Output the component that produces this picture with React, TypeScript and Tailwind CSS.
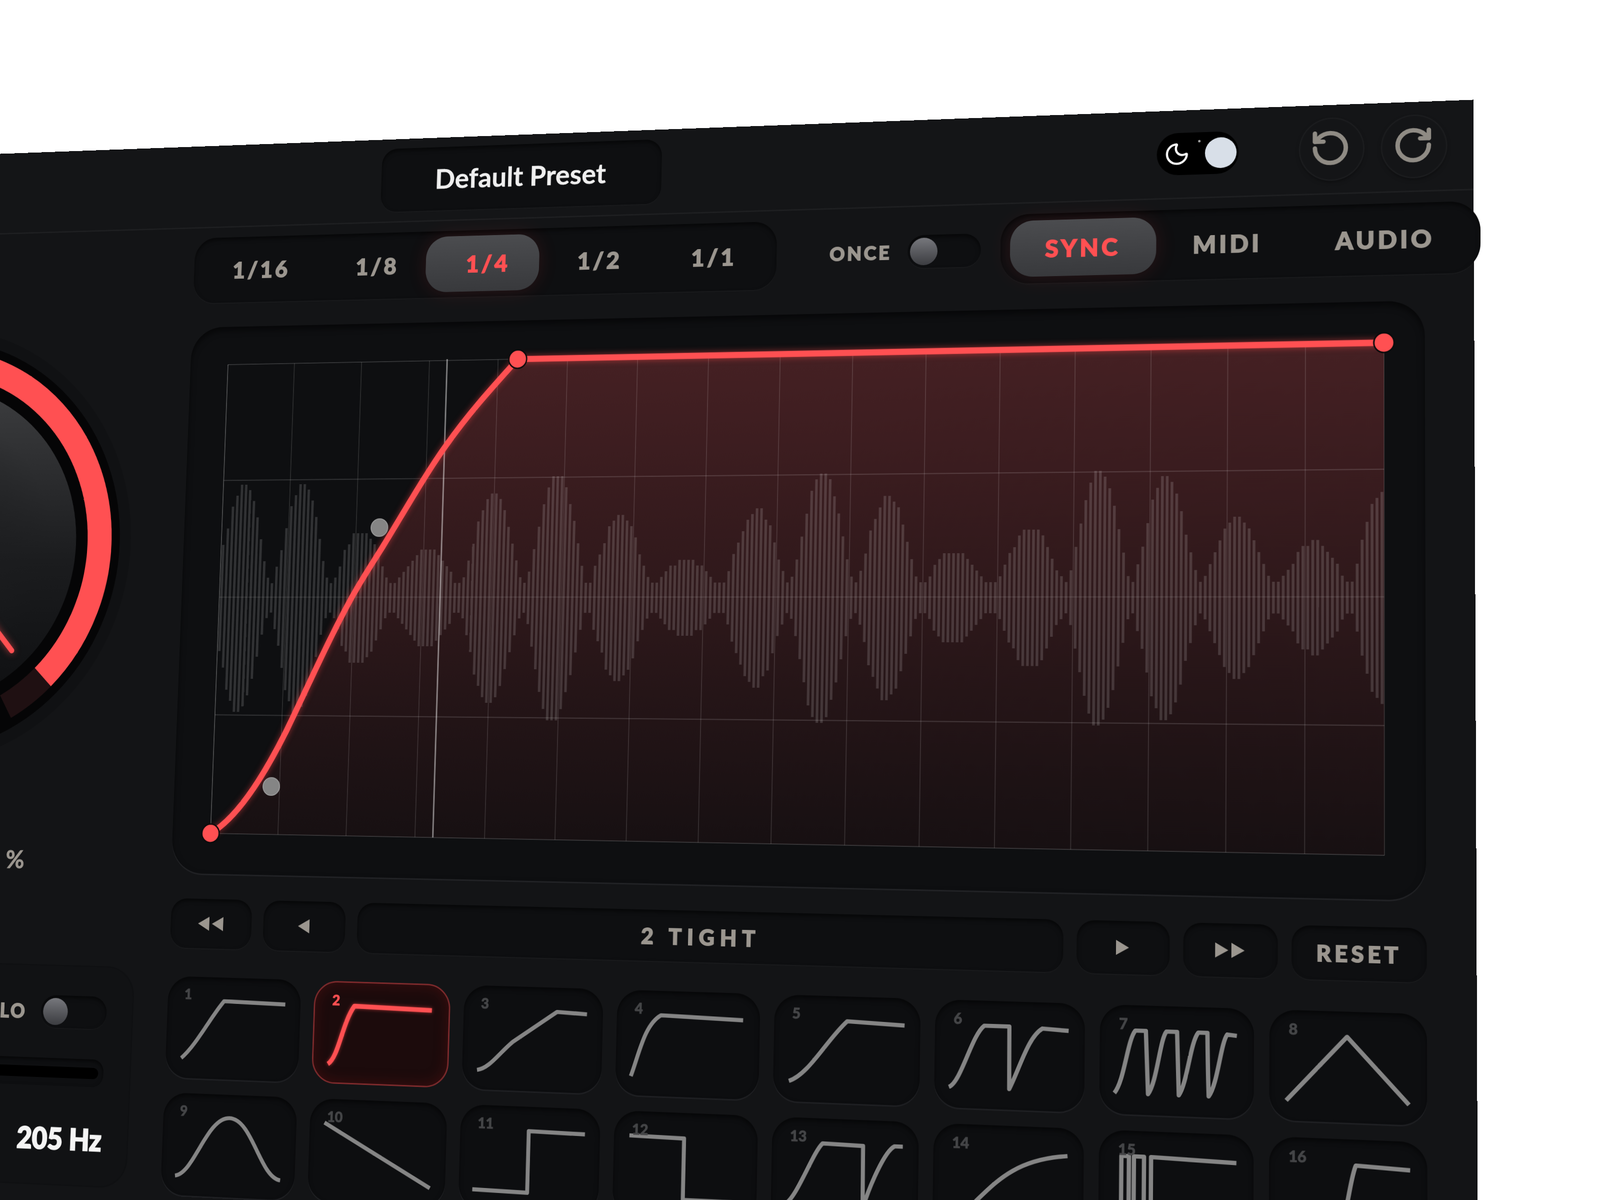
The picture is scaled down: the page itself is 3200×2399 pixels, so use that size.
import { Moon, RotateCcw, RotateCw } from "lucide-react";

const LOBES: [number, number][] = [
  [-90, 120], [48, 242], [184, 244], [317, 138], [474, 100], [617, 222], [759, 258], [898, 168], [1042, 74],
  [1196, 178], [1333, 256], [1473, 205], [1611, 90], [1774, 138], [1910, 256], [2043, 242], [2185, 152],
  [2343, 107], [2475, 208], [2620, 100],
];

function amplitude(x: number) {
  let i = 0;
  while (i < LOBES.length - 2 && LOBES[i + 1][0] <= x) i++;
  const [x0, a0] = LOBES[i];
  const [x1, a1] = LOBES[i + 1];
  const t = (x - x0) / (x1 - x0);
  const d = t < 0.5 ? t : 1 - t;
  const a = t < 0.5 ? a0 : a1;
  return 18 + (a - 18) * Math.pow(Math.cos(Math.PI * d), 1.4);
}

const BARS = Array.from({ length: 256 }, (_, i) => {
  const x = i * 9.69 + 2;
  return { x, a: Math.round(amplitude(x) / 12) * 12 + 8 };
});

const CURVE =
  "M0 1025 C 70 985 130 875 167 800 C 212 705 257 602 302 519 C 325 476 348 442 371 405 C 417 330 463 248 509 184 C 561 111 612 57 664 0 L 2480 0";

const PRESETS: { n: number; d: string }[] = [
  { n: 1, d: "M36 174 C 70 145 100 85 130 50 L270 53" },
  { n: 2, d: "M33 177 C 58 160 62 90 90 50 L268 54" },
  { n: 3, d: "M33 176 C 60 172 80 140 110 115 L205 50 L270 53" },
  { n: 4, d: "M33 177 C 50 130 60 70 95 50 L270 55" },
  { n: 5, d: "M33 175 C 75 160 110 90 153 50 L272 55" },
  { n: 6, d: "M30 175 C 55 165 75 70 101 50 L152 50 L153 175 C 175 130 190 70 219 52 L272 55" },
  { n: 7, d: "M30 175 C 50 150 55 70 71 50 L92 50 Q 95 120 97 175 C 115 150 120 65 133 50 L154 50 Q156 120 158 175 C 175 150 180 70 196 50 L214 50 Q215 120 217 175 C 235 150 240 70 253 52 L272 54" },
  { n: 8, d: "M33 177 L151 49 L270 177" },
  { n: 9, d: "M32 175 C 75 170 100 49 152 49 C 205 49 225 170 272 175" },
  { n: 10, d: "M33 50 L272 177" },
  { n: 11, d: "M30 175 L150 177 L150 50 L272 52" },
  { n: 12, d: "M33 50 L150 52 L150 177 L272 177" },
  { n: 13, d: "M30 175 C 55 160 85 70 106 50 L190 52 L191 177 C 205 130 235 60 255 50 L272 50" },
  { n: 14, d: "M33 177 C 60 176 70 170 87 153 C 130 110 170 65 272 55" },
  { n: 15, d: "M45 177 L45 50 L60 50 L60 177 M70 177 L70 50 L90 50 L90 177 M104 177 L104 50 L272 55" },
  { n: 16, d: "M33 177 L130 177 C 150 170 155 80 168 50 L272 55" },
];

const WELL = "bg-[#0e0f11] shadow-[inset_0_5px_9px_rgba(0,0,0,0.55),0_2px_0_rgba(255,255,255,0.025)]";
const LABEL = "font-black text-[#9b968f] [-webkit-text-stroke:2px_#9b968f]";

function Toggle() {
  return (
    <div className={`flex h-[70px] w-[154px] shrink-0 items-center rounded-full px-[5px] ${WELL}`}>
      <div className="h-[58px] w-[58px] rounded-full bg-linear-to-b from-[#77787d] to-[#3c3d41]" />
    </div>
  );
}

function Tab({ label, active, w, extra }: { label: string; active?: boolean; w: string; extra?: string }) {
  return (
    <div
      className={`flex h-full shrink-0 items-center justify-center rounded-[48px] text-[50px] font-black tracking-[0.12em] [-webkit-text-stroke:2px_currentColor] ${w} ${extra ?? ""} ${
        active
          ? "bg-linear-to-b from-[#4b4c4f] to-[#38393c] text-[#ff5052] shadow-[0_0_44px_rgba(255,60,60,0.12)]"
          : "text-[#9b968f]"
      }`}
    >
      {label}
    </div>
  );
}

function NavButton({ children, w }: { children: React.ReactNode; w: string }) {
  return (
    <div className={`flex h-[106px] shrink-0 items-center justify-center rounded-[36px] ${w} ${WELL}`}>{children}</div>
  );
}

function Triangles({ dir, count }: { dir: "l" | "r"; count: number }) {
  const width = count === 2 ? 60 : 28;
  const tri = (x: number) =>
    dir === "l" ? `M${x + 26} 0 L${x + 26} 30 L${x} 15 Z` : `M${x} 0 L${x} 30 L${x + 26} 15 Z`;
  return (
    <svg width={width} height={30} viewBox={`0 0 ${width} 30`} className="fill-[#9b968f]">
      <path d={tri(0)} />
      {count === 2 && <path d={tri(32)} />}
    </svg>
  );
}

function Knob() {
  return (
    <svg width={960} height={960} viewBox="-480 -480 960 960" className="shrink-0 overflow-visible">
      <defs>
        <linearGradient id="knobBody" x1="0" y1="0" x2="0" y2="1">
          <stop offset="0" stopColor="#3d3e40" />
          <stop offset="0.55" stopColor="#1b1c1e" />
          <stop offset="1" stopColor="#0e0f11" />
        </linearGradient>
        <radialGradient id="knobCap">
          <stop offset="0" stopColor="#1c1d1f" stopOpacity="0.9" />
          <stop offset="1" stopColor="#1c1d1f" stopOpacity="0" />
        </radialGradient>
      </defs>
      <circle r={490} fill="#101113" />
      <circle r={464} fill="#050506" />
      <path d="M294.2 294.2 A416 416 0 0 1 208 360" fill="none" stroke="#1f1012" strokeWidth={57} />
      <path d="M-294.2 294.2 A416 416 0 1 1 294.2 294.2" fill="none" stroke="#ff5052" strokeWidth={57} />
      <circle r={360} fill="url(#knobBody)" />
      <circle r={300} fill="url(#knobCap)" />
      <line
        x1={160}
        y1={170}
        x2={217}
        y2={236}
        stroke="#ff5052"
        strokeWidth={12}
        strokeLinecap="round"
        className="[filter:drop-shadow(0_0_8px_rgba(255,80,82,0.6))]"
      />
    </svg>
  );
}

function Graph() {
  return (
    <svg width={2480} height={1025} viewBox="0 0 2480 1025" className="block overflow-visible">
      <defs>
        <linearGradient id="under" x1="0" y1="0" x2="0" y2="1">
          <stop offset="0" stopColor="#452023" />
          <stop offset="1" stopColor="#171012" />
        </linearGradient>
      </defs>
      <path d={`${CURVE} L2480 1025 L0 1025 Z`} fill="url(#under)" />
      {BARS.map((b) => (
        <rect key={b.x} x={b.x} y={514 - b.a} width={5.5} height={b.a * 2} fill="#fff" fillOpacity={0.15} />
      ))}
      {Array.from({ length: 17 }, (_, i) => (
        <line key={i} x1={i * 155} y1={0} x2={i * 155} y2={1025} stroke="#fff" strokeOpacity={i === 0 ? 0.26 : 0.12} strokeWidth={2} />
      ))}
      {Array.from({ length: 5 }, (_, i) => (
        <line key={i} x1={0} y1={i * 256.25} x2={2480} y2={i * 256.25} stroke="#fff" strokeOpacity={i === 2 ? 0.12 : 0.16} strokeWidth={2} />
      ))}
      <line x1={505} y1={-3} x2={505} y2={1025} stroke="#fff" strokeOpacity={0.5} strokeWidth={3} />
      <path
        d={CURVE}
        fill="none"
        stroke="#ff5052"
        strokeWidth={13}
        className="[filter:drop-shadow(0_0_7px_rgba(255,70,72,0.55))]"
      />
      <circle cx={363} cy={362} r={19} fill="#858585" stroke="#999" strokeWidth={2} />
      <circle cx={136} cy={922} r={19} fill="#858585" stroke="#999" strokeWidth={2} />
      <circle cx={0} cy={1025} r={20} fill="#ff5052" stroke="#0b0b0c" strokeWidth={3} />
      <circle cx={664} cy={0} r={20} fill="#ff5052" stroke="#0b0b0c" strokeWidth={3} />
      <circle cx={2480} cy={0} r={20} fill="#ff5052" stroke="#0b0b0c" strokeWidth={3} />
    </svg>
  );
}

function PresetCard({ n, d }: { n: number; d: string }) {
  const active = n === 2;
  return (
    <div
      className={`relative h-[216px] rounded-[52px] ${
        active
          ? "border-[3px] border-[#7d2a2c] bg-[#1c0b0c] shadow-[inset_0_0_30px_rgba(120,20,20,0.35)]"
          : "bg-[#0d0e10] shadow-[inset_0_6px_10px_rgba(0,0,0,0.5),0_3px_0_#1e1f22]"
      }`}
    >
      <svg viewBox="0 0 305 216" className="absolute inset-0 h-full w-full">
        <path
          d={d}
          fill="none"
          stroke={active ? "#ff5052" : "#858585"}
          strokeWidth={active ? 10 : 8.5}
          strokeLinejoin="round"
          className={active ? "[filter:drop-shadow(0_0_4px_rgba(255,70,72,0.6))]" : ""}
        />
      </svg>
      <span
        className={`absolute left-[38px] top-[20px] text-[30px] leading-[32px] font-black [-webkit-text-stroke:1px_currentColor] ${
          active ? "text-[#ff5052]" : "text-[#444547]"
        }`}
      >
        {n}
      </span>
    </div>
  );
}

export default function App() {
  return (
    <div className="relative h-[2399px] w-[3200px] overflow-hidden bg-white font-['Lato','Liberation_Sans',sans-serif]">
      <div className="absolute left-0 top-0 flex h-[3100px] w-[4002px] origin-top-left flex-col bg-[#131416] [transform:matrix3d(0.837165,-0.041274,0,-0.00003435,-0.040429,0.889298,0,-0.000014916,0,0,1,0,456,729,0,1)_translate(-1346px,-491px)]">
        {/* header */}
        <header className="flex h-[185px] shrink-0 items-center border-b-[3px] border-[#1e1f21] bg-[#141517] pl-[1688px]">
          <div className={`flex h-[140px] w-[631px] items-center justify-center rounded-[36px] pb-[2px] text-[60px] font-bold text-[#efefef] [-webkit-text-stroke:0.4px_#efefef] ${WELL}`}>
            Default Preset
          </div>
          <div className="relative ml-[1051px] flex h-[88px] w-[166px] items-center justify-between rounded-full bg-black pl-[14px] pr-[4px]">
            <Moon size={54} strokeWidth={2} className="text-white" />
            <span className="absolute left-[84px] top-[16px] h-[5px] w-[5px] rounded-full bg-[#aaa]" />
            <div className="h-[64px] w-[64px] rounded-full bg-[#d8dfe8]" />
          </div>
          <div className="ml-[124px] flex items-center gap-[38px]">
            <div className="flex h-[125px] w-[125px] items-center justify-center rounded-full bg-[#141517] pb-[4px] pr-[6px] shadow-[0_0_0_3px_#1b1c1e,0_4px_8px_rgba(0,0,0,0.5)]">
              <RotateCcw size={82} strokeWidth={2.6} className="text-[#8f8b84]" />
            </div>
            <div className="flex h-[125px] w-[125px] items-center justify-center rounded-full bg-[#141517] pb-[4px] pr-[3px] shadow-[0_0_0_3px_#1b1c1e,0_4px_8px_rgba(0,0,0,0.5)]">
              <RotateCw size={82} strokeWidth={2.6} className="text-[#8f8b84]" />
            </div>
          </div>
        </header>

        {/* body */}
        <div className="flex pl-[106px]">
          {/* left column */}
          <div className="flex w-[1074px] shrink-0 flex-col items-center">
            <div className="mt-[221px]">
              <Knob />
            </div>
            <div className="mt-[184px] h-[60px] self-end pr-[268px] text-[54px] leading-[60px] font-bold text-[#9b968f] [-webkit-text-stroke:1px_#9b968f]">%</div>
            <div className="mt-[200px] flex h-[467px] w-[520px] flex-col items-end self-end rounded-[60px] bg-[#111214] pr-[59px] pt-[63px] shadow-[0_0_0_3px_#0f1012]">
              <div className="flex items-center gap-[34px]">
                <span className={`text-[42px] tracking-[0.1em] ${LABEL}`}>LO</span>
                <Toggle />
              </div>
              <div className="mr-[2px] mt-[65px] flex h-[59px] w-[470px] items-center justify-end rounded-[26px] bg-[#0e0f11] pr-[12px] shadow-[inset_0_4px_8px_rgba(0,0,0,0.6)]">
                <div className="h-[24px] w-full rounded-full bg-black" />
              </div>
              <div className="mt-[80px] text-[62px] leading-[64px] font-black whitespace-nowrap text-[#f4f4f4] [-webkit-text-stroke:2.5px_#f4f4f4]">205 Hz</div>
            </div>
          </div>

          {/* main column */}
          <div className="ml-[78px] flex w-[2649px] shrink-0 flex-col">
            <div className="mt-[22px] flex h-[146px] items-center">
              <div className={`flex h-full w-[1316px] shrink-0 items-center rounded-[50px] px-[26px] py-[12px] ${WELL}`}>
                <Tab label="1/16" w="w-[256px]" extra="pl-[8px]" />
                <Tab label="1/8" w="w-[256px]" extra="pl-[34px]" />
                <Tab label="1/4" active w="w-[256px]" extra="pl-[26px]" />
                <Tab label="1/2" w="w-[256px]" extra="pl-[14px]" />
                <Tab label="1/1" w="w-[256px]" extra="pl-[4px]" />
              </div>
              <span className={`ml-[114px] shrink-0 text-[40px] tracking-[0.12em] ${LABEL}`}>ONCE</span>
              <div className="ml-[34px]">
                <Toggle />
              </div>
              <div className={`ml-[41px] flex h-full w-[966px] shrink-0 items-center rounded-[60px] pl-[20px] py-[14px] ${WELL}`}>
                <Tab label="SYNC" active w="w-[301px]" />
                <Tab label="MIDI" w="w-[288px]" />
                <Tab label="AUDIO" w="w-[340px]" />
              </div>
            </div>

            <div className="mt-[54px] h-[1196px] w-[2648px] rounded-[72px] bg-[#0e0f11] pl-[88px] pt-[84px] shadow-[inset_0_8px_14px_rgba(0,0,0,0.55),0_3px_0_#212225]">
              <Graph />
            </div>

            <div className="ml-[4px] mt-[54px] flex gap-[27px]">
              <NavButton w="w-[186px]">
                <Triangles dir="l" count={2} />
              </NavButton>
              <NavButton w="w-[186px]">
                <Triangles dir="l" count={1} />
              </NavButton>
              <NavButton w="w-[1505px]">
                <span className={`text-[46px] tracking-[0.25em] ${LABEL}`}>2 TIGHT</span>
              </NavButton>
              <NavButton w="w-[186px]">
                <Triangles dir="r" count={1} />
              </NavButton>
              <NavButton w="w-[186px]">
                <Triangles dir="r" count={2} />
              </NavButton>
              <NavButton w="w-[261px]">
                <span className={`text-[44px] tracking-[0.16em] ${LABEL}`}>RESET</span>
              </NavButton>
            </div>

            <div className="ml-[4px] mt-[61px] grid grid-cols-8 gap-x-[30px] gap-y-[32px]">
              {PRESETS.map((p) => (
                <PresetCard key={p.n} n={p.n} d={p.d} />
              ))}
            </div>
          </div>
        </div>
      </div>
    </div>
  );
}
